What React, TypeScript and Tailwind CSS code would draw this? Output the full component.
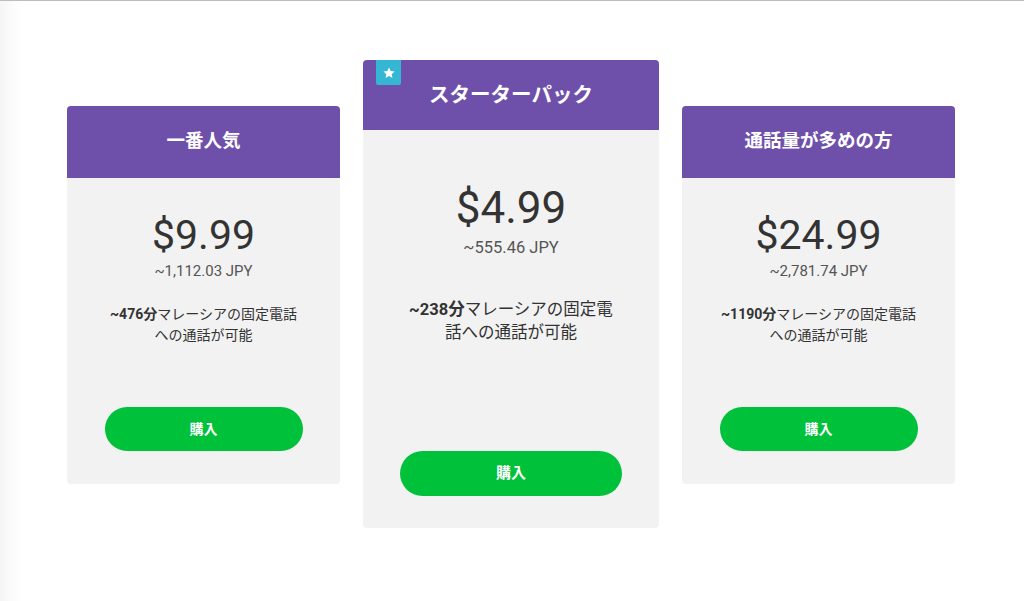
import React from 'react';

interface Plan {
  title: string;
  price: string;
  jpy: string;
  minutes: string;
  line1: string;
  line2: string;
  featured?: boolean;
}

const plans: Plan[] = [
  { title: '一番人気', price: '$9.99', jpy: '~1,112.03 JPY', minutes: '~476分', line1: 'マレーシアの固定電話', line2: 'への通話が可能' },
  { title: 'スターターパック', price: '$4.99', jpy: '~555.46 JPY', minutes: '~238分', line1: 'マレーシアの固定電', line2: '話への通話が可能', featured: true },
  { title: '通話量が多めの方', price: '$24.99', jpy: '~2,781.74 JPY', minutes: '~1190分', line1: 'マレーシアの固定電話', line2: 'への通話が可能' },
];

const font = { fontFamily: 'Roboto, "Noto Sans CJK JP", sans-serif' };

function StarBadge() {
  return (
    <div className="absolute left-[13px] top-0 flex h-[25px] w-[25px] items-center justify-center rounded-b-[2px] bg-[#35b6d3]">
      <svg viewBox="0 0 24 24" className="h-[14px] w-[14px]" fill="white">
        <path d="M12 2.5l2.9 6.1 6.6.8-4.9 4.6 1.3 6.6L12 17.3l-5.9 3.3 1.3-6.6-4.9-4.6 6.6-.8z" />
      </svg>
    </div>
  );
}

function PlanCard({ plan }: { plan: Plan }) {
  const f = plan.featured;
  return (
    <div
      className={`relative flex flex-col overflow-hidden rounded-[4px] bg-[#f2f2f2] ${
        f ? 'mt-[59px] w-[296px]' : 'mt-[105px] w-[273px]'
      }`}
    >
      <div className={`flex items-center justify-center bg-[#6e50ab] ${f ? 'h-[70px]' : 'h-[72px]'}`}>
        <span className={`font-bold text-white ${f ? 'text-[20.5px]' : 'text-[18.5px]'}`}>{plan.title}</span>
      </div>
      {f && <StarBadge />}
      <div className={`flex flex-col items-center text-[#333] ${f ? 'pt-[56px] pb-[32px]' : 'pt-[37px] pb-[33px]'}`}>
        <div className={`leading-none ${f ? 'text-[44px] h-[44px]' : 'text-[41px] h-[42px]'}`}>{plan.price}</div>
        <div className={`text-[#555] ${f ? 'mt-[8px] text-[16.5px] leading-[20px]' : 'mt-[5px] text-[15px] leading-[18px]'}`}>
          {plan.jpy}
        </div>
        <div
          className={`whitespace-nowrap text-center ${
            f ? 'mt-[40px] text-[16.5px] leading-[23px]' : 'mt-[24px] text-[14px] leading-[21px]'
          }`}
        >
          <div>
            <span className="font-bold">{plan.minutes}</span>
            {plan.line1}
          </div>
          <div>{plan.line2}</div>
        </div>
        <button
          className={`flex items-center justify-center rounded-full bg-[#00c13a] font-bold text-white ${
            f ? 'mt-[107px] h-[45px] w-[222px] text-[15px]' : 'mt-[61px] h-[44px] w-[198px] text-[14px]'
          }`}
        >
          購入
        </button>
      </div>
    </div>
  );
}

export default function App() {
  return (
    <div
      style={font}
      className="h-[601px] w-full overflow-hidden border-t border-[#bdbdbd] bg-white shadow-[inset_22px_0_18px_-14px_rgba(0,0,0,0.05)]"
    >
      <div className="flex items-start gap-[23px] pl-[67px]">
        {plans.map((p) => (
          <PlanCard key={p.title} plan={p} />
        ))}
      </div>
    </div>
  );
}
